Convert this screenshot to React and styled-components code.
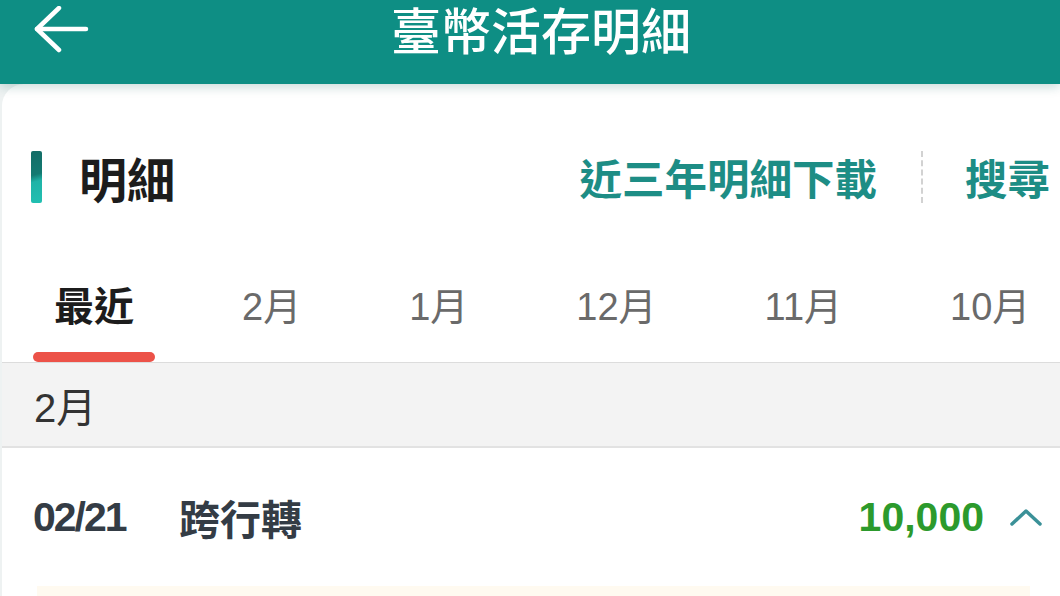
import React from 'react';
import styled, { createGlobalStyle } from 'styled-components';

const GlobalStyle = createGlobalStyle`
  html, body {
    margin: 0;
    padding: 0;
    background: #eef2f2;
    overflow: hidden;
  }
  body {
    font-family: "Liberation Sans", "Noto Sans CJK TC", sans-serif;
  }
`

const Page = styled.div`
  width: 1060px;
  height: 596px;
  display: flex;
  flex-direction: column;
  overflow: hidden;
`

const Header = styled.header`
  height: 84px;
  flex-shrink: 0;
  display: grid;
  grid-template-columns: 140px 1fr 118px;
  align-items: start;
  background: #0e8e84;
  box-shadow: 0 3px 10px rgba(10, 90, 85, 0.22);
  position: relative;
  z-index: 2;
`

const BackButton = styled.div`
  padding: 6px 0 0 34px;
  display: flex;
`

const Title = styled.h1`
  margin: 0;
  padding-top: 3px;
  text-align: center;
  color: #fff;
  font-family: "Noto Sans CJK TC", sans-serif;
  font-size: 50px;
  font-weight: 500;
  line-height: 1;
`

const Card = styled.main`
  flex: 1;
  background: #fff;
  border-top-left-radius: 22px;
  margin-left: 2px;
  display: flex;
  flex-direction: column;
`

const SectionHead = styled.div`
  margin-top: 67px;
  height: 52px;
  display: flex;
  align-items: center;
  padding: 0 10px 0 29px;
`

const Bar = styled.span`
  width: 11px;
  height: 52px;
  border-radius: 2px;
  background: linear-gradient(165deg, #136c66 0%, #137a72 45%, #1fb3a7 58%, #22c0b2 100%);
`

const SectionTitle = styled.h2`
  margin: 0 0 0 37px;
  font-family: "Noto Sans CJK TC", sans-serif;
  font-size: 48px;
  font-weight: 700;
  color: #1c1c1c;
  flex: 1;
`

const LinkText = styled.span`
  font-family: "Noto Sans CJK TC", sans-serif;
  font-size: 42.5px;
  font-weight: 700;
  color: #1d8d85;
  line-height: 52px;
`

const Divider = styled.span`
  width: 0;
  height: 52px;
  margin: 0 42px 0 44px;
  border-left: 2px dashed #d2d2d2;
`

const Tabs = styled.nav`
  margin-top: 80px;
  display: flex;
  gap: 66px;
  padding-left: 31px;
  border-bottom: 1px solid #dcdcdc;
`

const Tab = styled.div`
  display: flex;
  flex-direction: column;
  align-items: center;
  padding: 0 21px;
  font-family: "Liberation Sans", "Noto Sans CJK TC", sans-serif;
  font-size: ${p => (p.$active ? 40 : 38)}px;
  line-height: 48px;
  font-weight: ${p => (p.$active ? 700 : 400)};
  color: ${p => (p.$active ? '#1c1c1c' : '#6a6a6a')};
  white-space: nowrap;

  &::after {
    content: '';
    display: block;
    align-self: stretch;
    height: 10px;
    margin: 21px -21px 0;
    border-radius: 5px;
    background: ${p => (p.$active ? '#ec5248' : 'transparent')};
  }
`

const MonthHeader = styled.div`
  height: 83px;
  display: flex;
  align-items: center;
  padding-left: 32px;
  background: #f3f3f3;
  border-bottom: 2px solid #e2e2e2;
  font-size: 40px;
  color: #333;
  font-family: "Liberation Sans", "Noto Sans CJK TC", sans-serif;
`

const Row = styled.div`
  height: 138px;
  display: flex;
  align-items: center;
  padding: 0 17px 0 31px;
  color: #343c45;
`

const Date = styled.span`
  font-family: "Liberation Sans", sans-serif;
  font-size: 41px;
  font-weight: 700;
  letter-spacing: -2px;
  width: 146px;
`

const Desc = styled.span`
  flex: 1;
  font-family: "Noto Sans CJK TC", sans-serif;
  font-size: 41px;
  font-weight: 600;
`

const Amount = styled.span`
  font-family: "Liberation Sans", sans-serif;
  font-size: 41px;
  font-weight: 700;
  color: #2c9a2c;
  margin-right: 25px;
`

const Detail = styled.div`
  height: 12px;
  margin: 0 30px 0 35px;
  background: #fffaf0;
`

const ArrowLeft = () => (
  <svg width="56" height="50" viewBox="0 0 56 50" fill="none">
    <path d="M3 23 H52" stroke="#fff" strokeWidth="4.5" strokeLinecap="round" />
    <path d="M25 2 L3 23 L25 44" stroke="#fff" strokeWidth="4.5" strokeLinecap="round" strokeLinejoin="round" />
  </svg>
)

const CaretUp = () => (
  <svg width="34" height="22" viewBox="0 0 34 22" fill="none">
    <path d="M3 18 L17 5 L31 18" stroke="#3b9198" strokeWidth="3.5" strokeLinecap="round" strokeLinejoin="round" />
  </svg>
)

const tabs = ['最近', '2月', '1月', '12月', '11月', '10月']

export default function App() {
  return (
    <Page>
      <GlobalStyle />
      <Header>
        <BackButton>
          <ArrowLeft />
        </BackButton>
        <Title>臺幣活存明細</Title>
        <div />
      </Header>
      <Card>
        <SectionHead>
          <Bar />
          <SectionTitle>明細</SectionTitle>
          <LinkText>近三年明細下載</LinkText>
          <Divider />
          <LinkText>搜尋</LinkText>
        </SectionHead>
        <Tabs>
          {tabs.map((t, i) => (
            <Tab key={t} $active={i === 0}>{t}</Tab>
          ))}
        </Tabs>
        <MonthHeader>2月</MonthHeader>
        <Row>
          <Date>02/21</Date>
          <Desc>跨行轉</Desc>
          <Amount>10,000</Amount>
          <CaretUp />
        </Row>
        <Detail />
      </Card>
    </Page>
  )
}
